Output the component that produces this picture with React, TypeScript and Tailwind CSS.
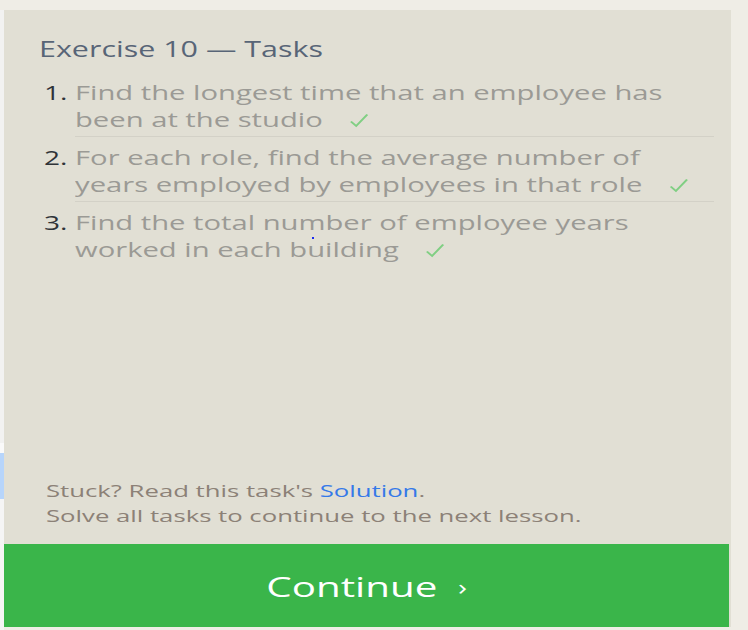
import React from "react";

const tasks = [
  ["Find the longest time that an employee has", "been at the studio"],
  ["For each role, find the average number of", "years employed by employees in that role"],
  ["Find the total number of employee years", "worked in each building"],
];

function Check() {
  return (
    <svg width="13" height="15" viewBox="0 0 13 15" className="inline-block ml-[18px] align-[-1px]">
      <path d="M1 8.5 L4.6 13 L12.2 1.5" fill="none" stroke="#80cf83" strokeWidth="1.5" />
    </svg>
  );
}

export default function App() {
  return (
    <div
      className="w-[748px] h-[630px] bg-[#efede6] flex overflow-hidden"
      style={{ fontFamily: '"Open Sans", "Noto Sans", sans-serif' }}
    >
      <div className="w-[4px] flex flex-col pt-[10px]">
        <div className="h-[433px] bg-[#f2f2f1]" />
        <div className="h-[10px] bg-[#fafafa]" />
        <div className="h-[46px] bg-[#b7d5fb]" />
        <div className="flex-1 bg-[#f5f5f5]" />
      </div>
      <div className="mt-[10px] w-[727px] h-[617px] bg-[#e1dfd4] flex flex-col">
        <div className="pl-[35px] pt-[25px] text-[21px] leading-[28px] text-[#586577] whitespace-nowrap">
          <div className="origin-left scale-x-[1.45]">Exercise 10 — Tasks</div>
        </div>
        <div className="mt-[16px] pr-[17px]">
          {tasks.map((t, i) => (
            <div key={i} className={`flex pl-[40px] ${i > 0 ? "mt-[7px]" : ""}`}>
              <div className="w-[31px] text-[20px] leading-[27px] text-[#2f3338] whitespace-nowrap">
                <div className="origin-left scale-x-[1.4]">{i + 1}.</div>
              </div>
              <div
                className={`relative flex-1 text-[20px] leading-[27px] text-[#9b9a95] whitespace-nowrap ${
                  i < 2 ? "border-b border-[#d3d1c7] pb-[3px]" : ""
                }`}
              >
                <div className="origin-left scale-x-[1.46]">{t[0]}</div>
                <div className="origin-left scale-x-[1.46]">
                  {t[1]}
                  <Check />
                </div>
                {i === 2 && (
                  <span className="absolute left-[237px] top-[28px] w-[2px] h-[2px] bg-[#1a2cf0]" />
                )}
              </div>
            </div>
          ))}
        </div>
        <div className="flex-1" />
        <div className="pl-[42px] pb-[16px] text-[17px] leading-[25px] text-[#8c8177] whitespace-nowrap">
          <div className="origin-left scale-x-[1.512]">
            Stuck? Read this task's <span className="text-[#3579e8]">Solution</span>.
          </div>
          <div className="origin-left scale-x-[1.512]">Solve all tasks to continue to the next lesson.</div>
        </div>
        <div className="h-[83px] w-[725px] bg-[#3ab54a] flex items-center justify-center text-white text-[28px] whitespace-nowrap">
          <div className="scale-x-[1.44]">
            Continue <span className="ml-[7px] text-[21px] align-[2px]">›</span>
          </div>
        </div>
      </div>
    </div>
  );
}
